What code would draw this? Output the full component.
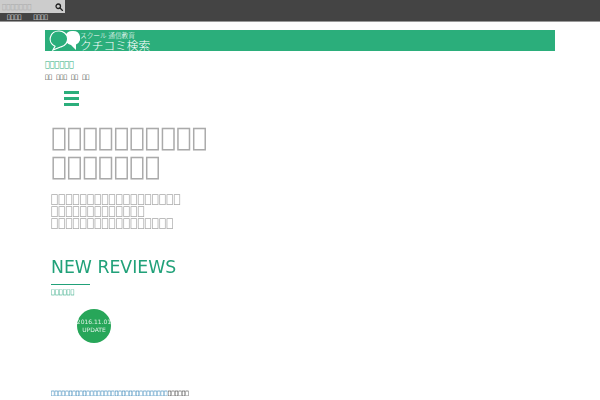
<script>
  const box = '\uE000'
  const tofu = (n) => box.repeat(n)
</script>

<div class="page">
  <header class="topbar">
    <div class="search">
      <span class="search-input">{tofu(7)}</span>
      <svg class="search-icon" viewBox="0 0 16 16" width="8" height="8" fill="none" stroke="#222" stroke-width="2.6">
        <circle cx="6.500" cy="6.500" r="4.500"/>
        <line x1="10" y1="10" x2="15" y2="15" stroke-linecap="round"/>
      </svg>
    </div>
    <nav class="topnav">
      <span>{tofu(4)}</span>
      <span>{tofu(4)}</span>
    </nav>
  </header>

  <main class="wrap">
    <div class="logo">
      <svg class="bubbles" viewBox="49 30 31 21" width="31" height="21">
        <path d="M73 31a7 7 0 0 1 3 13.400l0 5.600-5-5a7 7 0 0 1 2-14z" fill="#fff"/>
        <path d="M59 31a8.500 8 0 0 1 2 15.800L53 50l2-3.800A8.500 8 0 0 1 59 31z" fill="#2bae7b" stroke="#fff" stroke-width="1.200"/>
      </svg>
      <div class="logo-text">
        <span class="logo-sub">スクール 通信教育</span>
        <span class="logo-main">クチコミ検索</span>
      </div>
    </div>

    <p class="tagline">{tofu(6)}</p>
    <div class="links">
      <span>{tofu(2)}</span><span>{tofu(3)}</span><span>{tofu(2)}</span><span>{tofu(2)}</span>
    </div>

    <button class="burger" aria-label="menu"><i></i><i></i><i></i></button>

    <section class="hero">
      <h1>{tofu(10)} {tofu(7)}</h1>
      <p>{tofu(18)}<br>{tofu(13)}<br>{tofu(17)}</p>
    </section>

    <section class="reviews">
      <h2>NEW REVIEWS</h2>
      <div class="rule"></div>
      <p class="sub">{tofu(6)}</p>
      <div class="badge">
        <span>2016.11.01</span>
        <span>UPDATE</span>
      </div>
      <p class="entry"><span class="entry-link">{tofu(33)}</span>{tofu(6)}</p>
    </section>
  </main>
</div>

<style>
  :global(body) {
    font-family: "DejaVu Sans", sans-serif;
    background: #fff;
    color: #222;
  }

  .page {
    height: 400px;
    overflow: hidden;
  }

  .topbar {
    height: 22px;
    background: #444;
    border-bottom: 1px solid #999;
    box-sizing: border-box;
  }

  .search {
    width: 65px;
    height: 13px;
    background: #ccc;
    display: flex;
    align-items: center;
    justify-content: space-between;
    padding: 0 2px 0 2px;
    box-sizing: border-box;
  }

  .search-input {
    font-size: 7px;
    color: #aaa;
  }

  .search-icon {
    flex-shrink: 0;
  }

  .topnav {
    display: flex;
    gap: 12px;
    padding-left: 7px;
    font-size: 6px;
    line-height: 8px;
    color: #fff;
  }

  .wrap {
    margin: 0 45px;
  }

  .logo {
    margin-top: 8px;
    height: 21px;
    background: #2bae7b;
    display: flex;
    overflow: hidden;
    color: #fff;
  }

  .bubbles {
    flex-shrink: 0;
    margin-left: 4px;
  }

  .logo-text {
    display: flex;
    flex-direction: column;
    font-family: "Noto Sans CJK JP", sans-serif;
    font-weight: 300;
  }

  .logo-sub {
    font-size: 6.700px;
    line-height: 8px;
    margin-top: 1px;
  }

  .logo-main {
    font-size: 11.700px;
    line-height: 12px;
  }

  .tagline {
    margin: 9px 0 0;
    font-size: 8px;
    line-height: 10px;
    color: #2bae7b;
  }

  .links {
    display: flex;
    gap: 4px;
    margin-top: 2px;
    font-size: 6px;
    line-height: 9px;
    color: #222;
  }

  .burger {
    display: flex;
    flex-direction: column;
    gap: 2.500px;
    width: 15px;
    padding: 0;
    margin: 9.500px 0 0 19px;
    border: 0;
    background: none;
  }

  .burger i {
    display: block;
    height: 3.500px;
    background: #2bae7b;
  }

  .hero {
    margin: 17px 0 0 6px;
    will-change: transform;
  }

  h1 {
    margin: 0;
    width: 170px;
    font-size: 26px;
    line-height: 29px;
    font-weight: 400;
    color: #aaa;
  }

  .hero p {
    margin: 11.500px 0 0;
    font-size: 12px;
    line-height: 12.300px;
    color: #aaa;
  }

  .reviews {
    margin: 27px 0 0 6px;
    will-change: transform;
  }

  h2 {
    margin: 0;
    font-size: 17.300px;
    line-height: 22px;
    font-weight: 400;
    color: #21a179;
  }

  .rule {
    width: 39px;
    height: 1px;
    margin-top: 5.500px;
    background: #21a179;
  }

  .sub {
    margin: 2px 0 0;
    font-size: 6.500px;
    line-height: 10px;
    color: #21a179;
  }

  .badge {
    display: flex;
    flex-direction: column;
    align-items: center;
    justify-content: center;
    width: 34px;
    height: 34px;
    margin: 12px 0 0 26px;
    border-radius: 50%;
    background: #27a659;
    color: rgba(255, 255, 255, 0.85);
    font-size: 6px;
    line-height: 8px;
    white-space: nowrap;
  }

  .entry {
    margin: 46px 0 0;
    font-size: 5.900px;
    line-height: 9px;
    color: #222;
    white-space: nowrap;
  }

  .entry-link {
    color: #0b6aa8;
  }
</style>
